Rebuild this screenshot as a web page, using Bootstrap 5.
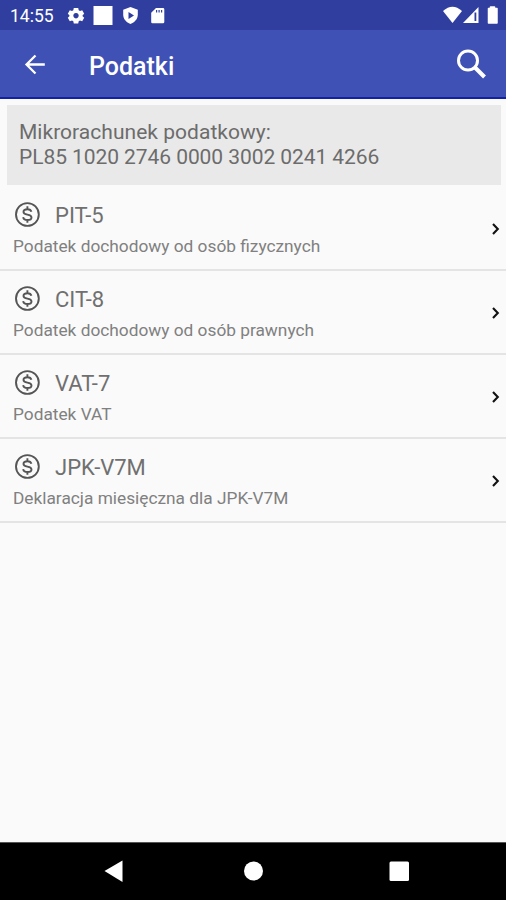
<!DOCTYPE html>
<html lang="pl">
<head>
<meta charset="utf-8">
<meta name="viewport" content="width=device-width, initial-scale=1">
<title>Podatki</title>
<link href="https://cdn.jsdelivr.net/npm/bootstrap@5.3.0/dist/css/bootstrap.min.css" rel="stylesheet">
<style>
body{font-family:Roboto,"Liberation Sans",sans-serif;background:#fafafa;color:#6c6c6c;overflow:hidden}
svg{display:block;flex:none}
.statusbar{height:30px;background:#303f9f;padding:0 7px 0 10px}
.clock{font-size:17.5px;line-height:30px;width:55px;padding-top:2px}
.appbar{height:69px;background:#3f51b5;border-bottom:2px solid #1323a0;padding:0 18px 0 22px}
.apptitle{font-size:25px;font-weight:500;line-height:30px;margin-left:41px;padding-top:6px}
.account{margin:6px 5px 0 7px;height:80px;background:#e9e9e9;padding:15px 12px;font-size:21px;line-height:25px;letter-spacing:.03px}
.acctno{letter-spacing:-.07px}
.taxlist{margin-top:2px}
.taxrow{height:84px;padding:13px 4px 0 13px;border-bottom:2px solid #e4e4e4}
.taxname{font-size:22px;line-height:28px;gap:14px;color:#707070}
.taxname span{padding-top:2px}
.taxinfo{font-size:17.3px;line-height:22px;margin-top:5px;color:#808080}
.chev{margin-top:22px}
.softkeys{height:58px;background:#000;border-top:1px solid #555}
.softkeys svg{width:146px}
</style>
<script src="https://cdn.jsdelivr.net/npm/bootstrap@5.3.0/dist/js/bootstrap.bundle.min.js" defer></script>
</head>
<body>
<svg width="0" height="0" class="d-none">
<symbol id="coin" viewBox="0 0 28 28"><circle cx="14.400" cy="13.500" r="11.400" fill="none" stroke="#555" stroke-width="1.900"/><path d="M14.400 5.300v3M14.400 18.700v3M18.400 10.800C18 9 16.600 8.200 14.400 8.200c-2.300 0-3.900 1-3.900 2.700 0 1.600 1.300 2.200 3.900 2.700 2.800.5 4.100 1.200 4.100 2.800 0 1.600-1.600 2.600-4.100 2.600-2.500 0-4-1-4.200-2.900" fill="none" stroke="#555" stroke-width="1.900"/></symbol>
<symbol id="chevron" viewBox="0 0 10 14"><path d="M2 2l4.800 5-4.800 5" fill="none" stroke="#111" stroke-width="2.100"/></symbol>
</svg>
<div class="d-flex flex-column vh-100">
<header>
<div class="statusbar d-flex align-items-center text-white">
<span class="clock text-nowrap">14:55</span>
<svg width="110" height="30" viewBox="0 0 110 30" fill="#fff"><path fill-rule="evenodd" d="M8.800 8h4.400l.5 2.200 1.300.8 2.200-.7 2 3.500-1.600 1.500v1l1.600 1.500-2 3.400-2.200-.7-1.300.8-.5 2.200H8.800l-.5-2.200-1.300-.8-2.200.7-2-3.400 1.600-1.500v-1l-1.600-1.500 2-3.500 2.200.7 1.300-.8zM11 13a2.700 2.700 0 1 0 .01 0z"/><path d="M28.500 6h19v19h-19z"/><path fill-rule="evenodd" d="M65.500 7l7.300 2.800v5c0 4.300-3.100 7.600-7.300 9.200-4.200-1.600-7.300-4.900-7.300-9.200v-5zM63.500 12v7l5.500-3.500z"/><path fill-rule="evenodd" d="M91 8h7q1.300 0 1.300 1.300v12.600q0 1.300-1.300 1.300H87.500q-1.300 0-1.300-1.300V12.800zM91 10v2.500h1.200v-2.500zm2.500 0v2.500h1.200v-2.500zm2.500 0v2.500h1.200v-2.500z"/></svg>
<svg class="ms-auto" width="58" height="30" viewBox="0 0 58 30" fill="#fff"><path d="M2 11Q11.500 2.500 21 11l-9.500 12z"/><path fill-rule="evenodd" d="M37.500 7v16H22zM33.500 12.500V21h1.800v-8.500z"/><path d="M47.500 8.500h2V7h4v1.500h2.500v14.500h-8.500z" stroke="#fff" stroke-width="1.500" stroke-linejoin="round"/></svg>
</div>
<nav class="appbar d-flex align-items-center text-white">
<svg width="26" height="26" viewBox="0 0 26 26" fill="none" stroke="#fff" stroke-width="2.300"><path d="M22.800 13.500H5M13.500 4.500L4.500 13.500l9 9"/></svg>
<h1 class="apptitle mb-0 text-nowrap">Podatki</h1>
<svg class="ms-auto" width="34" height="34" viewBox="0 0 34 34" fill="none" stroke="#fff"><circle cx="14" cy="13.500" r="9.500" stroke-width="3"/><path d="M20.500 20L30.500 30" stroke-width="4"/></svg>
</nav>
</header>
<main class="flex-grow-1">
<section class="account"><div>Mikrorachunek podatkowy:</div><div class="acctno text-nowrap">PL85 1020 2746 0000 3002 0241 4266</div></section>
<ul class="taxlist list-unstyled mb-0">
<li class="taxrow d-flex justify-content-between"><div><div class="taxname d-flex align-items-center"><svg width="28" height="28"><use href="#coin"/></svg><span>PIT-5</span></div><div class="taxinfo">Podatek dochodowy od osób fizycznych</div></div><svg class="chev" width="12" height="14"><use href="#chevron"/></svg></li>
<li class="taxrow d-flex justify-content-between"><div><div class="taxname d-flex align-items-center"><svg width="28" height="28"><use href="#coin"/></svg><span>CIT-8</span></div><div class="taxinfo">Podatek dochodowy od osób prawnych</div></div><svg class="chev" width="12" height="14"><use href="#chevron"/></svg></li>
<li class="taxrow d-flex justify-content-between"><div><div class="taxname d-flex align-items-center"><svg width="28" height="28"><use href="#coin"/></svg><span>VAT-7</span></div><div class="taxinfo">Podatek VAT</div></div><svg class="chev" width="12" height="14"><use href="#chevron"/></svg></li>
<li class="taxrow d-flex justify-content-between"><div><div class="taxname d-flex align-items-center"><svg width="28" height="28"><use href="#coin"/></svg><span>JPK-V7M</span></div><div class="taxinfo">Deklaracja miesięczna dla JPK-V7M</div></div><svg class="chev" width="12" height="14"><use href="#chevron"/></svg></li>
</ul>
</main>
<footer class="softkeys d-flex justify-content-center">
<svg height="58" viewBox="0 0 146 58" fill="#fff"><path d="M70.500 28L88.500 17.500v21.500z"/></svg>
<svg height="58" viewBox="0 0 146 58" fill="#fff"><circle cx="73.500" cy="28" r="9.500"/></svg>
<svg height="58" viewBox="0 0 146 58" fill="#fff"><rect x="63.500" y="18.500" width="19.500" height="19.500" rx="1.500"/></svg>
</footer>
</div>
</body>
</html>
